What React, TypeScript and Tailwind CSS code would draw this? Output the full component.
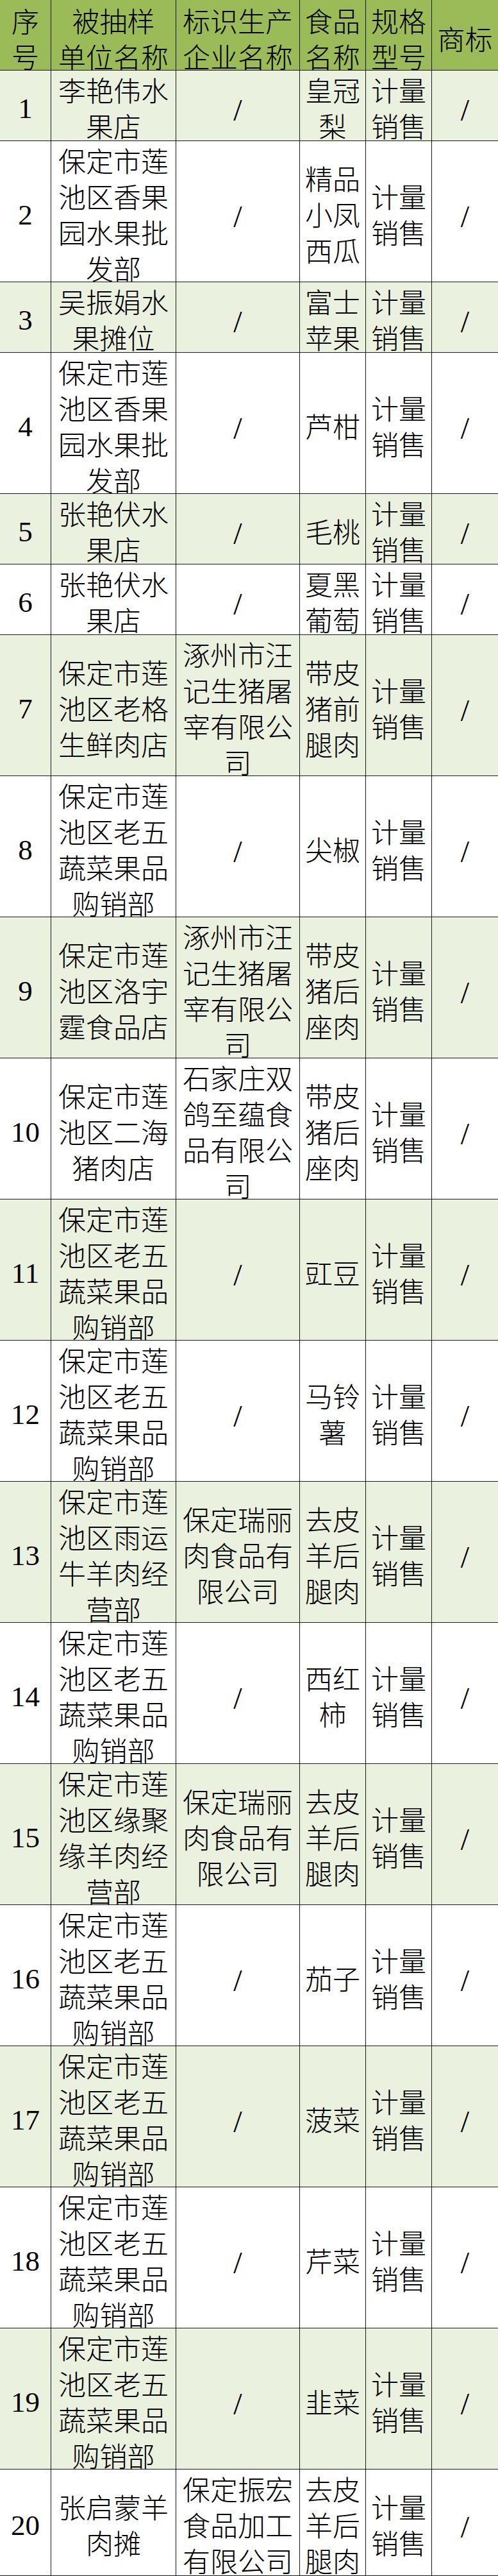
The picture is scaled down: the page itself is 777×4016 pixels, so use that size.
const rows = [
  { no: "1", unit: "李艳伟水果店", maker: "/", food: "皇冠梨", h: "h-[110px]" },
  { no: "2", unit: "保定市莲池区香果园水果批发部", maker: "/", food: "精品小凤西瓜", h: "h-[220px]" },
  { no: "3", unit: "吴振娟水果摊位", maker: "/", food: "富士苹果", h: "h-[110px]" },
  { no: "4", unit: "保定市莲池区香果园水果批发部", maker: "/", food: "芦柑", h: "h-[220px]" },
  { no: "5", unit: "张艳伏水果店", maker: "/", food: "毛桃", h: "h-[110px]" },
  { no: "6", unit: "张艳伏水果店", maker: "/", food: "夏黑葡萄", h: "h-[110px]" },
  { no: "7", unit: "保定市莲池区老格生鲜肉店", maker: "涿州市汪记生猪屠宰有限公司", food: "带皮猪前腿肉", h: "h-[220px]" },
  { no: "8", unit: "保定市莲池区老五蔬菜果品购销部", maker: "/", food: "尖椒", h: "h-[220px]" },
  { no: "9", unit: "保定市莲池区洛宇霆食品店", maker: "涿州市汪记生猪屠宰有限公司", food: "带皮猪后座肉", h: "h-[220px]" },
  { no: "10", unit: "保定市莲池区二海猪肉店", maker: "石家庄双鸽至蕴食品有限公司", food: "带皮猪后座肉", h: "h-[220px]" },
  { no: "11", unit: "保定市莲池区老五蔬菜果品购销部", maker: "/", food: "豇豆", h: "h-[220px]" },
  { no: "12", unit: "保定市莲池区老五蔬菜果品购销部", maker: "/", food: "马铃薯", h: "h-[220px]" },
  { no: "13", unit: "保定市莲池区雨运牛羊肉经营部", maker: "保定瑞丽肉食品有限公司", food: "去皮羊后腿肉", h: "h-[220px]" },
  { no: "14", unit: "保定市莲池区老五蔬菜果品购销部", maker: "/", food: "西红柿", h: "h-[220px]" },
  { no: "15", unit: "保定市莲池区缘聚缘羊肉经营部", maker: "保定瑞丽肉食品有限公司", food: "去皮羊后腿肉", h: "h-[220px]" },
  { no: "16", unit: "保定市莲池区老五蔬菜果品购销部", maker: "/", food: "茄子", h: "h-[220px]" },
  { no: "17", unit: "保定市莲池区老五蔬菜果品购销部", maker: "/", food: "菠菜", h: "h-[220px]" },
  { no: "18", unit: "保定市莲池区老五蔬菜果品购销部", maker: "/", food: "芹菜", h: "h-[220px]" },
  { no: "19", unit: "保定市莲池区老五蔬菜果品购销部", maker: "/", food: "韭菜", h: "h-[220px]" },
  { no: "20", unit: "张启蒙羊肉摊", maker: "保定振宏食品加工有限公司", food: "去皮羊后腿肉", h: "h-[166px]" },
];

const cols = "grid grid-cols-[79px_195px_193px_103px_103px_104px] border-b border-[#1a1a1a]";
const cell = "flex items-center justify-center text-center border-l border-[#1a1a1a]";

function Slash() {
  return <span className="text-[48px] leading-none font-normal">/</span>;
}

export default function App() {
  return (
    <div
      className="w-[777px] bg-white text-black text-[43px] leading-[56px] font-light"
      style={{ fontFamily: '"Liberation Serif", "Noto Sans CJK SC", serif' }}
    >
      {/* header */}
      <div className={`${cols} h-[110px] bg-[#9bbb59]`}>
        <div className="flex items-center justify-center text-center px-1 pt-[8px]">序号</div>
        <div className={`${cell} flex-col pt-[8px]`}>
          <span>被抽样</span>
          <span>单位名称</span>
        </div>
        <div className={`${cell} pt-[8px]`}>标识生产企业名称</div>
        <div className={`${cell} pt-[8px]`}>食品名称</div>
        <div className={`${cell} pt-[8px]`}>规格型号</div>
        <div className={`${cell} pt-[8px]`}>商标</div>
      </div>

      {rows.map((r, i) => (
        <div key={r.no} className={`${cols} ${r.h} ${i % 2 === 0 ? "bg-[#ebf1df]" : "bg-white"}`}>
          <div className="flex items-center justify-center text-[45px] font-normal">{r.no}</div>
          <div className={`${cell} px-2 pt-[6px]`}>{r.unit}</div>
          <div className={`${cell} px-2 pt-[6px]`}>{r.maker === "/" ? <Slash /> : r.maker}</div>
          <div className={`${cell} px-2 pt-[6px]`}>{r.food}</div>
          <div className={`${cell} px-2 pt-[6px]`}>计量销售</div>
          <div className={`${cell} pt-[6px]`}>
            <Slash />
          </div>
        </div>
      ))}
    </div>
  );
}
